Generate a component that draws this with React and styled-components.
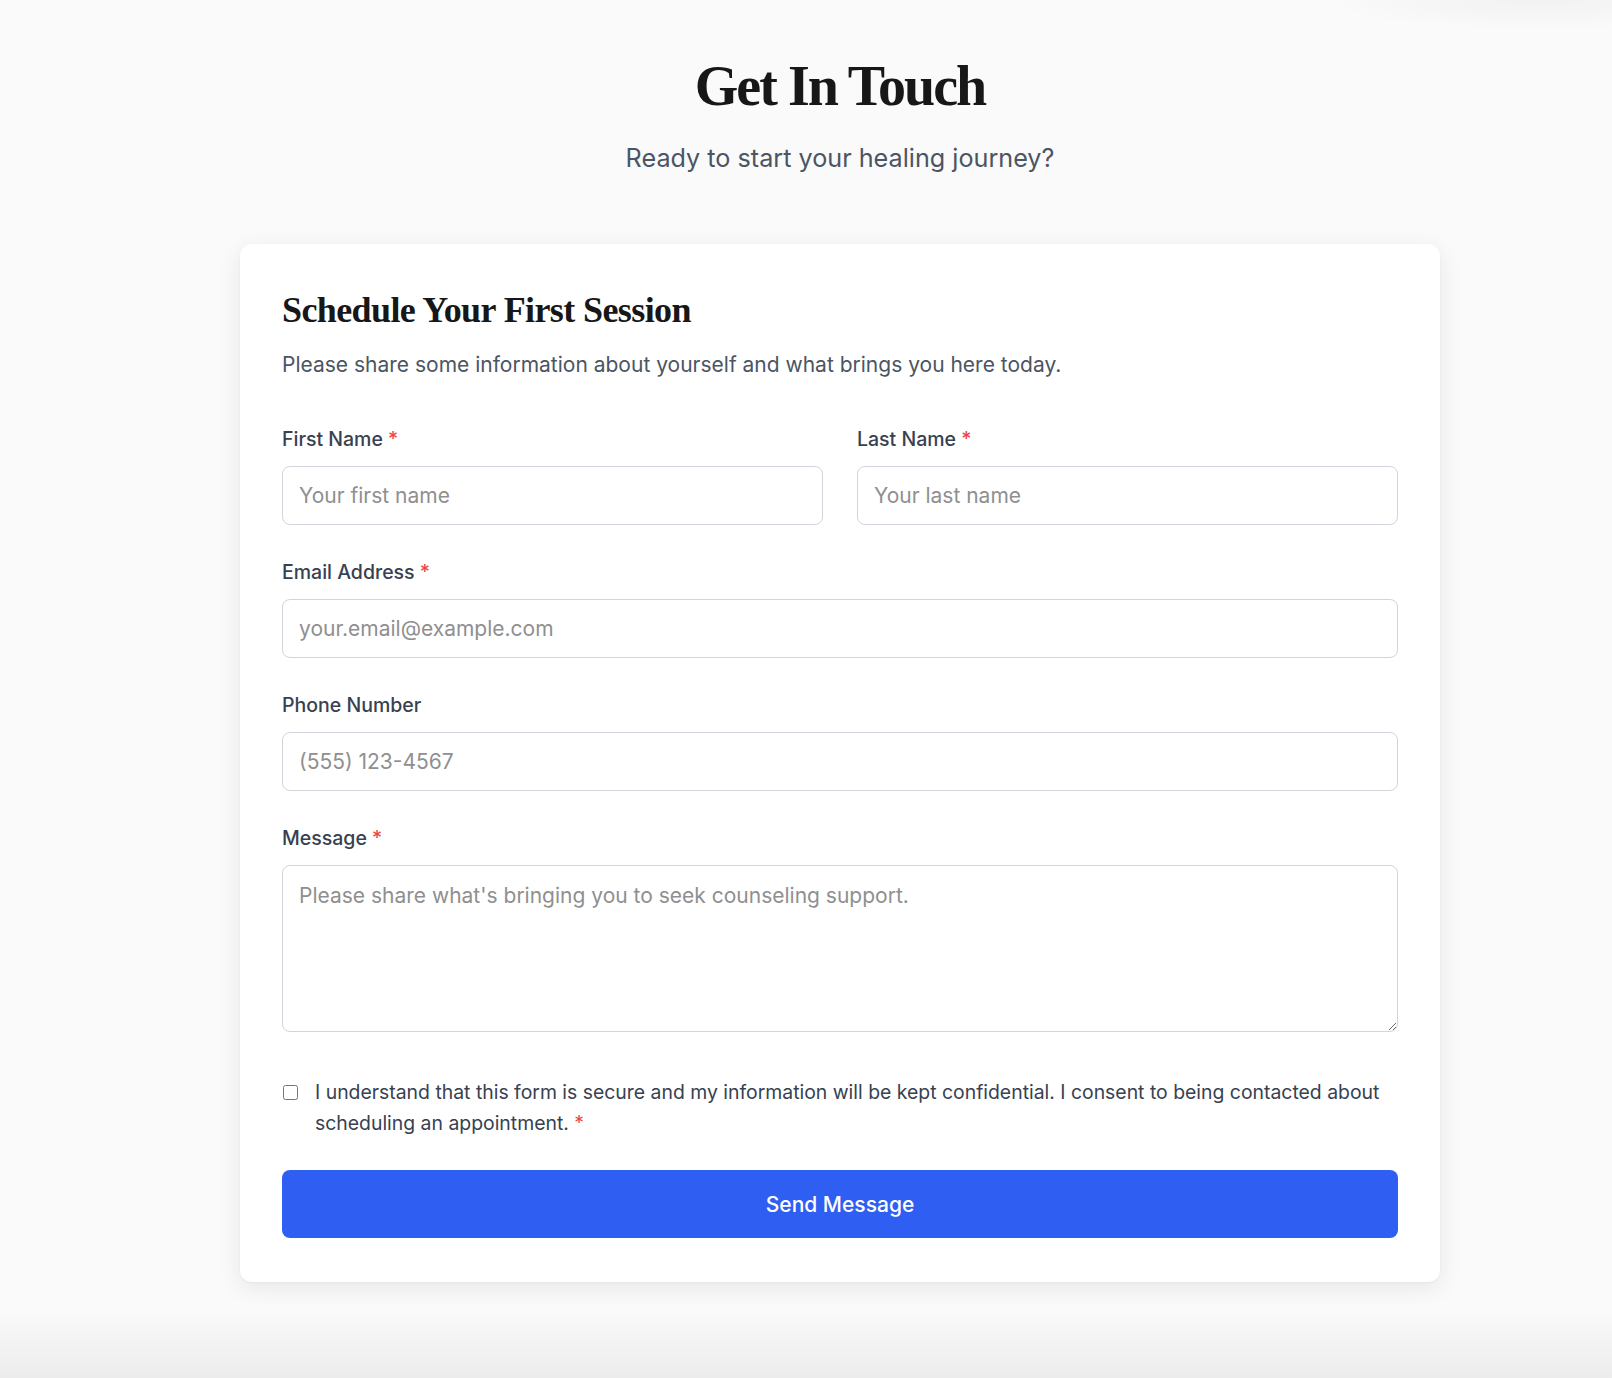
import React, { useState } from 'react';
import styled, { createGlobalStyle } from 'styled-components';

const GlobalStyle = createGlobalStyle`
  html, body {
    margin: 0;
    padding: 0;
  }
  body {
    font-family: Inter, "Noto Sans", "Liberation Sans", sans-serif;
    background: #fafafa;
  }
  * {
    box-sizing: border-box;
  }
`;

const App = () => {
  const [form, setForm] = useState({
    firstName: '',
    lastName: '',
    email: '',
    phone: '',
    message: '',
    consent: false,
  });

  const update = (key) => (e) => {
    const value = e.target.type === 'checkbox' ? e.target.checked : e.target.value;
    setForm(prev => ({ ...prev, [key]: value }));
  };

  const handleSubmit = (e) => {
    e.preventDefault();
  };

  return (
    <Page>
      <GlobalStyle />
      <Header>
        <Title>Get In Touch</Title>
        <Subtitle>Ready to start your healing journey?</Subtitle>
      </Header>

      <Card>
        <CardTitle>Schedule Your First Session</CardTitle>
        <CardText>
          Please share some information about yourself and what brings you here today.
        </CardText>

        <Form onSubmit={handleSubmit}>
          <Row>
            <Field>
              <Label>First Name <Required>*</Required></Label>
              <Input
                placeholder="Your first name"
                value={form.firstName}
                onChange={update('firstName')}
              />
            </Field>
            <Field>
              <Label>Last Name <Required>*</Required></Label>
              <Input
                placeholder="Your last name"
                value={form.lastName}
                onChange={update('lastName')}
              />
            </Field>
          </Row>

          <Field>
            <Label>Email Address <Required>*</Required></Label>
            <Input
              type="email"
              placeholder="your.email@example.com"
              value={form.email}
              onChange={update('email')}
            />
          </Field>

          <Field>
            <Label>Phone Number</Label>
            <Input
              type="tel"
              placeholder="(555) 123-4567"
              value={form.phone}
              onChange={update('phone')}
            />
          </Field>

          <Field>
            <Label>Message <Required>*</Required></Label>
            <TextArea
              placeholder="Please share what's bringing you to seek counseling support."
              value={form.message}
              onChange={update('message')}
            />
          </Field>

          <Consent>
            <Checkbox
              type="checkbox"
              checked={form.consent}
              onChange={update('consent')}
            />
            <ConsentText>
              I understand that this form is secure and my information will be kept confidential. I consent to being contacted about scheduling an appointment. <Required>*</Required>
            </ConsentText>
          </Consent>

          <SubmitButton type="submit">Send Message</SubmitButton>
        </Form>
      </Card>
    </Page>
  );
};

const Page = styled.div`
  min-height: 100vh;
  padding: 53px 0 60px 68px;
  display: flex;
  flex-direction: column;
  align-items: center;
  background:
    radial-gradient(ellipse 220px 30px at 1540px 0px, rgba(0, 0, 0, 0.035), transparent),
    linear-gradient(180deg, #fafafa 0%, #fafafa 95%, #ececec 100%);
`;

const Header = styled.div`
  text-align: center;
`;

const Title = styled.h1`
  margin: 0;
  font-family: "Liberation Serif", "DejaVu Serif", serif;
  font-weight: 700;
  font-size: 56px;
  line-height: 67px;
  letter-spacing: -2px;
  color: #171717;
`;

const Subtitle = styled.p`
  margin: 20px 0 0;
  font-size: 25.2px;
  line-height: 36px;
  color: #4b5563;
`;

const Card = styled.div`
  width: 1200px;
  margin-top: 68px;
  padding: 44px 42px 44px;
  background: #fff;
  border-radius: 12px;
  box-shadow: 0 6px 24px rgba(0, 0, 0, 0.08), 0 1px 3px rgba(0, 0, 0, 0.04);
`;

const CardTitle = styled.h2`
  margin: 0;
  font-family: "Liberation Serif", "DejaVu Serif", serif;
  font-weight: 700;
  font-size: 36px;
  line-height: 44px;
  letter-spacing: -0.6px;
  color: #171717;
`;

const CardText = styled.p`
  margin: 18px 0 0;
  font-size: 21px;
  line-height: 30px;
  color: #4b5563;
`;

const Form = styled.form`
  margin-top: 46px;
  display: flex;
  flex-direction: column;
  gap: 34px;
`;

const Row = styled.div`
  display: grid;
  grid-template-columns: 1fr 1fr;
  gap: 34px;
`;

const Field = styled.div`
  display: flex;
  flex-direction: column;
`;

const Label = styled.label`
  margin-bottom: 13px;
  font-size: 19.5px;
  line-height: 27px;
  font-weight: 500;
  color: #374151;
`;

const Required = styled.span`
  color: #ef4444;
`;

const Input = styled.input`
  height: 59px;
  padding: 0 16px;
  border: 1px solid #d1d5db;
  border-radius: 8px;
  font-family: Inter, "Liberation Sans", sans-serif;
  font-size: 21px;
  color: #1f2937;
  background: #fff;
  outline: none;

  &::placeholder {
    color: #8f8f8f;
  }

  &:focus {
    border-color: #2f5ef3;
  }
`;

const TextArea = styled.textarea`
  height: 167px;
  padding: 15px 16px;
  border: 1px solid #d1d5db;
  border-radius: 8px;
  font-family: Inter, "Liberation Sans", sans-serif;
  font-size: 21px;
  line-height: 30px;
  color: #1f2937;
  background: #fff;
  outline: none;
  resize: vertical;

  &::placeholder {
    color: #8f8f8f;
  }

  &:focus {
    border-color: #2f5ef3;
  }
`;

const Consent = styled.label`
  margin-top: 11px;
  display: flex;
  align-items: flex-start;
  gap: 17px;
  color: #374151;
`;

const ConsentText = styled.span`
  font-size: 19.4px;
  line-height: 30.5px;
`;

const Checkbox = styled.input`
  flex: none;
  width: 15px;
  height: 15px;
  margin: 8px 0 0 1px;
`;

const SubmitButton = styled.button`
  margin-top: -2px;
  height: 68px;
  border: none;
  border-radius: 8px;
  background: #2f5ef3;
  color: #fff;
  font-family: Inter, "Liberation Sans", sans-serif;
  font-size: 21px;
  font-weight: 500;
  cursor: pointer;

  &:hover {
    background: #2651d8;
  }
`;

export default App;
